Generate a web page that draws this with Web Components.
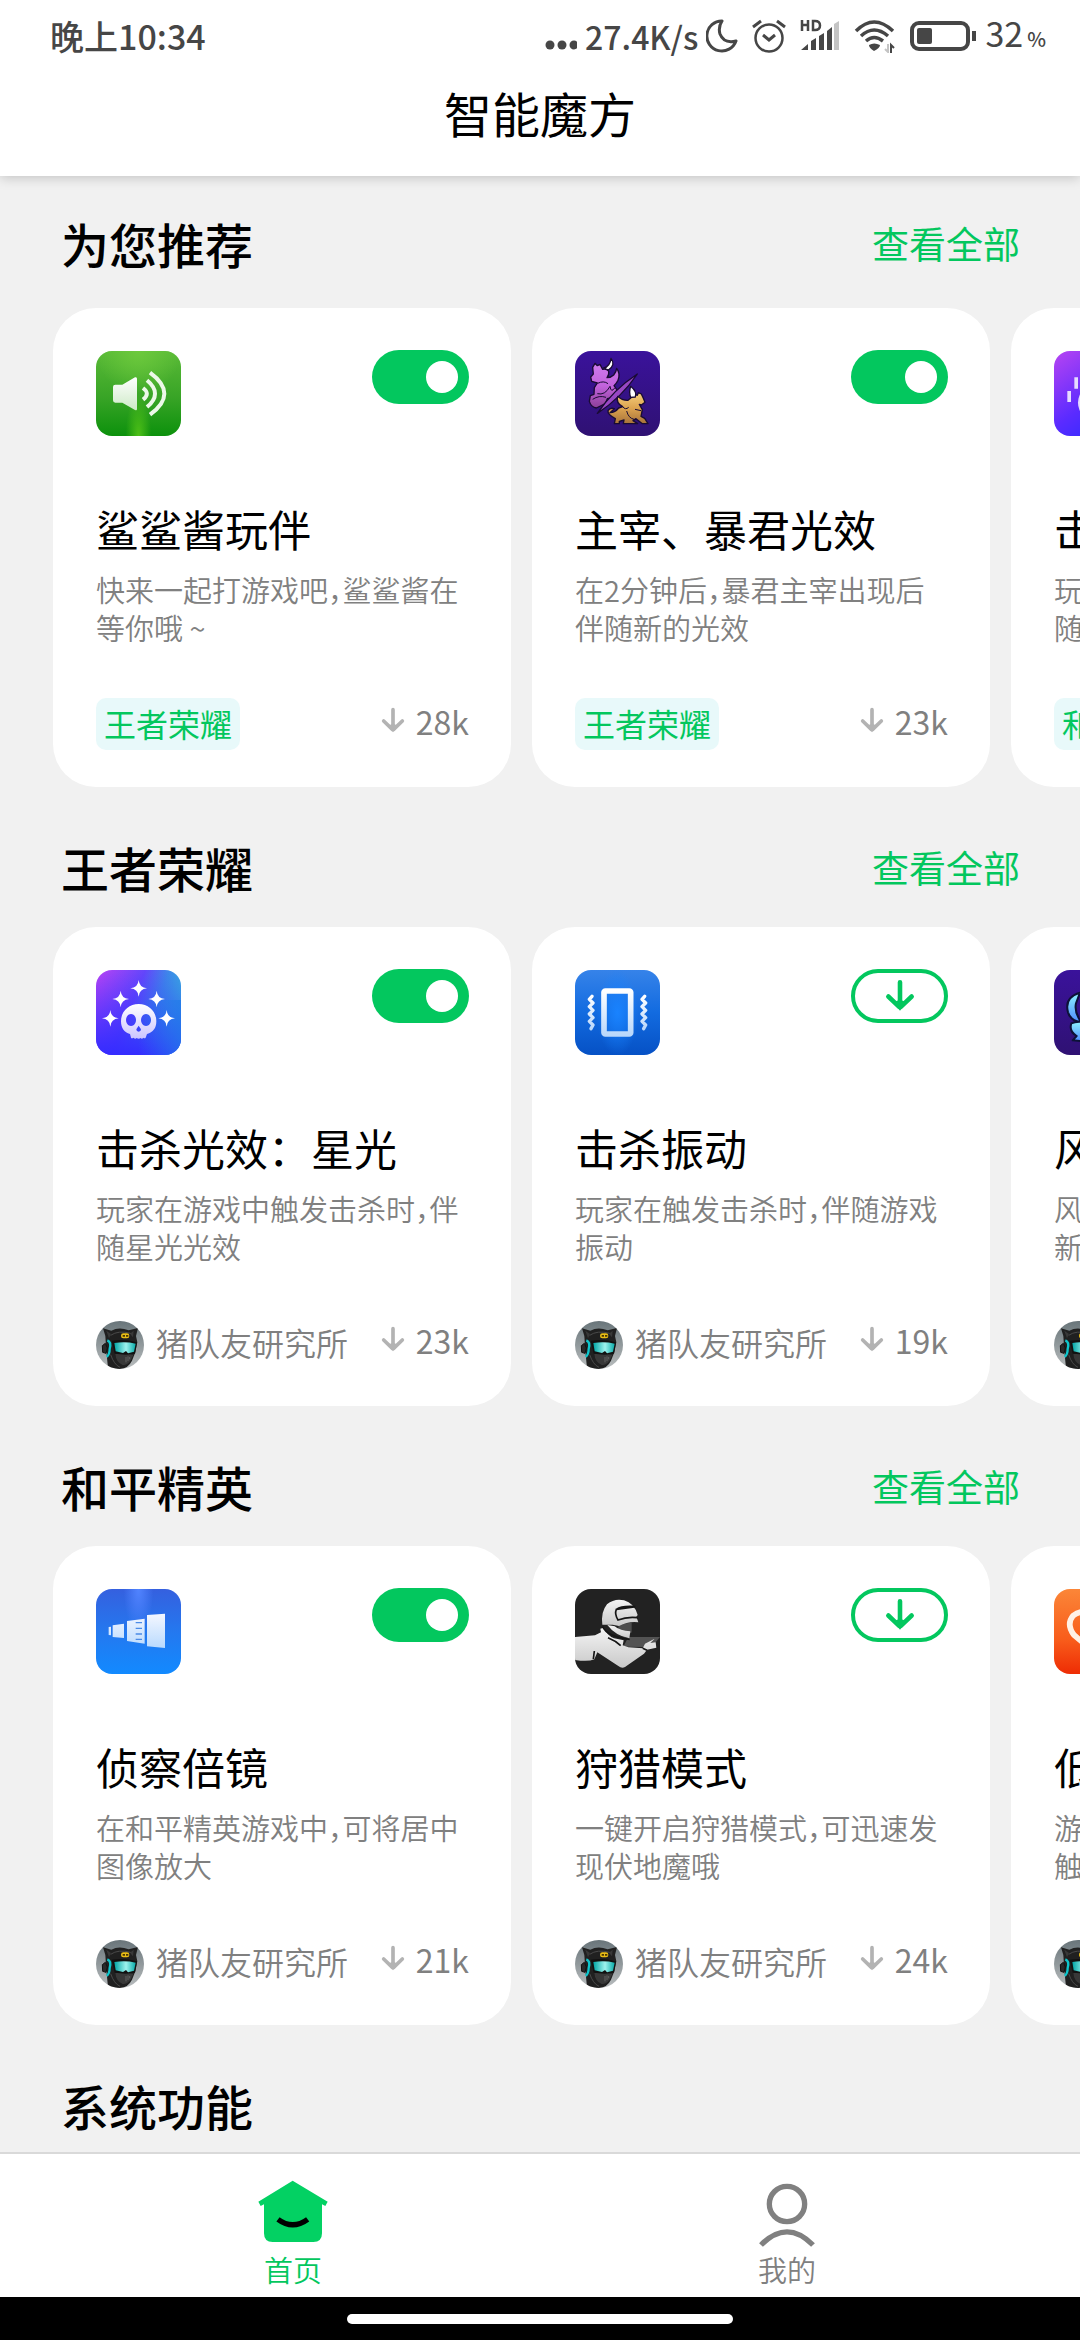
<!DOCTYPE html>
<html lang="zh-CN">
<head>
<meta charset="utf-8">
<meta name="viewport" content="width=device-width, initial-scale=1">
<title>智能魔方</title>
<style>
  :root {
    --green: #03c75e;
    --page: #f1f1f1;
    --text: #000;
    --muted: #808080;
    --status: #464646;
  }
  body {
    margin: 0;
    font-family: "Noto Sans CJK SC", "Noto Sans", sans-serif;
    color: var(--text);
    background: var(--page);
  }
</style>
</head>
<body>
<magic-cube-app>
  <status-bar slot="top" time="晚上10:34" speed="27.4K/s" battery="32"></status-bar>
  <app-header slot="top">智能魔方</app-header>

  <feature-section name="为您推荐" more first>
    <feature-card icon="speaker" name="鲨鲨酱玩伴" desc="快来一起打游戏吧，鲨鲨酱在等你哦 ~" tag="王者荣耀" count="28k" enabled></feature-card>
    <feature-card icon="beasts" name="主宰、暴君光效" desc="在2分钟后，暴君主宰出现后伴随新的光效" tag="王者荣耀" count="23k" enabled></feature-card>
    <feature-card icon="burst" name="击杀光效" desc="玩家在游戏中触发击杀时，伴随光效" tag="和平精英" count="22k" enabled></feature-card>
  </feature-section>

  <feature-section name="王者荣耀" more>
    <feature-card icon="skull" name="击杀光效：星光" desc="玩家在游戏中触发击杀时，伴随星光光效" author="猪队友研究所" count="23k" enabled></feature-card>
    <feature-card icon="vibrate" name="击杀振动" desc="玩家在触发击杀时，伴随游戏振动" author="猪队友研究所" count="19k"></feature-card>
    <feature-card icon="dragon" name="风暴龙王光效" desc="风暴龙王出现后，将会伴随着新的光效" author="猪队友研究所" count="18k"></feature-card>
  </feature-section>

  <feature-section name="和平精英" more>
    <feature-card icon="scope" name="侦察倍镜" desc="在和平精英游戏中，可将居中图像放大" author="猪队友研究所" count="21k" enabled></feature-card>
    <feature-card icon="hunter" name="狩猎模式" desc="一键开启狩猎模式，可迅速发现伏地魔哦" author="猪队友研究所" count="24k"></feature-card>
    <feature-card icon="heart" name="低血振动" desc="游戏中当角色血量较低时，将触发振动" author="猪队友研究所" count="20k"></feature-card>
  </feature-section>

  <feature-section name="系统功能"></feature-section>

  <tab-bar slot="bottom">
    <tab-item icon="home" href="#home" active>首页</tab-item>
    <tab-item icon="mine" href="#mine">我的</tab-item>
  </tab-bar>
  <home-indicator slot="bottom"></home-indicator>
</magic-cube-app>

<script>
// app tiles, all drawn on a 255 x 255 grid
const star = (x, y) => `<path d="M${x} ${y - 25}Q${x + 2} ${y - 2} ${x + 25} ${y}Q${x + 2} ${y + 2} ${x} ${y + 25}Q${x - 2} ${y + 2} ${x - 25} ${y}Q${x - 2} ${y - 2} ${x} ${y - 25}Z"/>`;
const zigzag = x => `M${x + 3} 79L${x - 5} 88L${x + 6} 99L${x - 5} 110L${x + 6} 121L${x - 5} 132L${x + 6} 143L${x - 5} 154L${x + 6} 165L${x} 176`;

const tiles = {
  speaker: `
    <linearGradient id="g" x2="0" y2="1"><stop stop-color="#5aba37"/><stop offset=".55" stop-color="#38a426"/><stop offset="1" stop-color="#0c910c"/></linearGradient>
    <radialGradient id="l" cx=".5" cy="1" r=".5" gradientTransform="matrix(.3 0 0 1 .35 0)"><stop stop-color="#4fc018"/><stop offset="1" stop-color="#4fc018" stop-opacity="0"/></radialGradient>
    <radialGradient id="t" cx=".5" cy="0" r=".5"><stop stop-color="#6cc93c"/><stop offset="1" stop-color="#6cc93c" stop-opacity="0"/></radialGradient>
    <linearGradient id="w" x2="0" y2="1"><stop stop-color="#fff"/><stop offset="1" stop-color="#cdeac6"/></linearGradient>
    <path fill="url(#g)" d="M0 0H255V255H0Z"/><path fill="url(#l)" d="M0 0H255V255H0Z"/><path fill="url(#t)" d="M0 0H255V255H0Z"/>
    <path fill="url(#w)" d="M58 101H79L117 79Q123 77 123 83V174Q123 180 117 177L79 155H58Q51 155 51 148V108Q51 101 58 101Z"/>
    <path fill="none" stroke="#ecf8e8" stroke-width="12" d="M141 111Q164 128 141 146M153 88Q201 128 153 168M162 65Q248 128 162 191"/>`,
  beasts: `
    <linearGradient id="g" x2="0" y2="1"><stop stop-color="#3a129b"/><stop offset="1" stop-color="#2f1173"/></linearGradient>
    <linearGradient id="p" x2="0" y2="1"><stop stop-color="#cf7bee"/><stop offset=".5" stop-color="#c263dc"/><stop offset="1" stop-color="#8c3f98"/></linearGradient>
    <linearGradient id="y" x2="0" y2="1"><stop stop-color="#f6cf7c"/><stop offset=".5" stop-color="#dca350"/><stop offset="1" stop-color="#a8733a"/></linearGradient>
    <path fill="url(#g)" d="M0 0H255V255H0Z"/>
    <g stroke="#190b33" stroke-width="4" stroke-linejoin="round">
      <path fill="url(#p)" d="M60 37L67 44L75 40L83 55Q93 52 101 60Q103 72 96 80Q108 80 116 72Q124 62 125 52Q137 68 129 88Q125 97 117 104L127 118L123 138L97 143L91 158L64 171Q48 168 43 151L46 134L57 130L58 110L67 96L50 91L47 78L55 69L53 49Z"/>
      <path fill="#fff" d="M108 22Q123 42 100 57L86 51Q105 47 108 22Z"/>
      <path fill="#9847c4" d="M187 69Q139 140 67 187Q115 116 187 69Z"/>
      <path fill="url(#y)" d="M181 131L187 133L190 125L199 129L205 142L210 154L199 162L193 160L202 176L198 196L209 202L219 218H202L183 203L174 209L188 218H145L147 207L133 211V218H118L121 203Q97 190 99 179Q105 169 118 173L105 185Q121 184 131 171L143 167Q122 156 128 136Q142 149 159 148L168 140Z"/>
      <path fill="#fff" d="M167 106Q187 122 181 138L167 139Q161 124 167 106Z"/>
      <path fill="none" stroke-width="3" d="M68 97Q86 88 99 98M67 128Q90 134 105 106Q108 127 119 111M53 145Q72 132 93 139M161 169Q151 178 143 167M155 180Q160 201 177 205M180 175L198 179"/>
    </g>`,
  burst: `
    <linearGradient id="g" x2=".7" y2="1"><stop stop-color="#b744f2"/><stop offset=".6" stop-color="#5b2bff"/><stop offset="1" stop-color="#2a2bff"/></linearGradient>
    <path fill="url(#g)" d="M0 0H255V255H0Z"/>
    <path fill="#e6dcff" d="M61 79h11v34h-11zM40 120h11v33h-11zM180 79h11v34h-11zM204 120h11v33h-11z"/><circle cx="127" cy="155" r="55" fill="#e6dcff"/>`,
  skull: `
    <linearGradient id="g" x2="1" y2=".4"><stop stop-color="#bb43f4"/><stop offset=".5" stop-color="#6446fb"/><stop offset=".75" stop-color="#3d8be8"/><stop offset="1" stop-color="#35bedb"/></linearGradient>
    <linearGradient id="b" x2="0" y2="1"><stop stop-color="#3a2bff" stop-opacity="0"/><stop offset="1" stop-color="#352cff"/></linearGradient>
    <linearGradient id="r"><stop offset=".5" stop-color="#217bea" stop-opacity="0"/><stop offset="1" stop-color="#217bea"/></linearGradient>
    <linearGradient id="w" x2="0" y2="1"><stop stop-color="#fff"/><stop offset="1" stop-color="#ccc4ff"/></linearGradient>
    <path fill="url(#g)" d="M0 0H255V255H0Z"/><path fill="url(#b)" d="M0 0H255V255H0Z"/><path fill="url(#r)" opacity=".75" d="M0 90H255V255H0Z"/>
    <g fill="#fff">${star(128, 55)}${star(74, 87)}${star(182, 87)}${star(43, 145)}${star(212, 145)}</g>
    <path fill="url(#w)" fill-rule="evenodd" d="M128 102C158 102 181 124 181 154C181 175 171 187 153 192L149 203Q146 207 142 203Q138 209 134 204Q128 209 122 204Q117 209 113 203Q106 207 105 203L102 192C84 187 75 174 75 154C75 124 98 102 128 102ZM105 132A15 18 0 1 0 105.1 132ZM150 132A15 18 0 1 0 150.100 132ZM128 167L121 178Q121 185 128 185Q135 185 135 178Z"/>`,
  vibrate: `
    <linearGradient id="g" x2="0" y2="1"><stop stop-color="#3683e9"/><stop offset=".5" stop-color="#126be0"/><stop offset="1" stop-color="#0651c5"/></linearGradient>
    <radialGradient id="l" cx=".5" cy=".5" r=".5" gradientTransform="matrix(.5 0 0 1 .25 0)"><stop stop-color="#1983ff"/><stop offset="1" stop-color="#1983ff" stop-opacity="0"/></radialGradient>
    <linearGradient id="w" x2="0" y2="1"><stop stop-color="#fff"/><stop offset="1" stop-color="#bad8fb"/></linearGradient>
    <path fill="url(#g)" d="M0 0H255V255H0Z"/><path fill="url(#l)" d="M0 0H255V255H0Z"/>
    <rect x="87" y="63" width="80" height="129" rx="4" fill="none" stroke="url(#w)" stroke-width="17"/>
    <path fill="none" stroke="url(#w)" stroke-width="10" stroke-linecap="round" stroke-linejoin="round" d="${zigzag(48)}${zigzag(206)}"/>`,
  dragon: `
    <linearGradient id="g" x2="0" y2="1"><stop stop-color="#3a129b"/><stop offset="1" stop-color="#2f1173"/></linearGradient>
    <linearGradient id="w" x2="0" y2="1"><stop stop-color="#8df4ff"/><stop offset="1" stop-color="#4e8bff"/></linearGradient>
    <path fill="url(#g)" d="M0 0H255V255H0Z"/>
    <g fill="url(#w)" stroke="#0d1238" stroke-width="6" stroke-linejoin="round">
      <path d="M78 68Q30 82 42 127Q50 153 82 157Q60 126 66 100Z"/>
      <path d="M52 160Q70 150 110 160L140 190L100 215L56 211L68 198Q44 184 52 160Z"/>
    </g>`,
  scope: `
    <linearGradient id="g" x2="0" y2="1"><stop stop-color="#3560df"/><stop offset=".5" stop-color="#2478ef"/><stop offset="1" stop-color="#128aff"/></linearGradient>
    <radialGradient id="l" cx=".5" cy="0" r=".5" gradientTransform="matrix(.35 0 0 1 .325 0)"><stop stop-color="#5184ff"/><stop offset="1" stop-color="#5184ff" stop-opacity="0"/></radialGradient>
    <linearGradient id="w" x2="0" y2="1"><stop stop-color="#f4f7ff"/><stop offset="1" stop-color="#b9dafe"/></linearGradient>
    <path fill="url(#g)" d="M0 0H255V255H0Z"/><path fill="url(#l)" d="M0 0H255V255H0Z"/>
    <path fill="url(#w)" d="M38 114L45 113V139L38 138ZM50 109L84 104V147L50 144ZM93 96L146 89V164L93 156ZM153 78L207 74V177L153 172Z"/>
    <path stroke="#4b8be6" stroke-width="4" d="M119 101H138M119 118H138M119 135H138M119 151H138"/>`,
  hunter: `
    <linearGradient id="w" x2="0" y2="1"><stop stop-color="#f4f4f4"/><stop offset="1" stop-color="#c9c9c9"/></linearGradient>
    <path fill="#222" d="M0 0H255V255H0Z"/>
    <path fill="#535353" d="M160 144H255L238 164L205 174L145 173Z"/>
    <path fill="#4c4c4c" d="M132 105L170 101V130L150 146L128 128Z"/>
    <path fill="url(#w)" d="M0 144L60 139L78 130L76 119L86 116Q96 139 117 148L146 154L143 169L160 175L203 178L210 164L239 149L226 162L242 160L244 176L216 182L207 194L150 234Q140 239 130 231L67 190L58 211Q40 219 0 213Z"/>
    <path fill="url(#w)" d="M82 107Q77 69 96 46Q119 27 147 34Q177 42 188 78L184 83L190 100Q161 96 132 111L113 107Z"/>
    <path fill="url(#w)" d="M97 108L119 112Q135 126 166 127L163 148Q121 140 97 108Z"/>
    <g fill="none" stroke="#151515" stroke-width="5"><path d="M178 54L124 61Q118 75 129 93Q157 82 188 86M124 61Q140 50 181 53M83 113Q96 143 164 151M99 146Q122 155 137 170M58 186L55 210M203 178L216 184"/></g>`,
  heart: `
    <linearGradient id="g" x2="0" y2="1"><stop stop-color="#fb8638"/><stop offset=".6" stop-color="#f85c1b"/><stop offset="1" stop-color="#ee2c04"/></linearGradient>
    <path fill="url(#g)" d="M0 0H255V255H0Z"/>
    <path fill="none" stroke="#fff1e6" stroke-width="17" d="M127 195L60 138Q36 106 57 80Q92 53 127 94Q162 53 197 80Q218 106 195 138Z"/>`
};

const avatar = `
  <svg class="avatar" viewBox="0 0 144 144" aria-hidden="true">
    <defs>
      <linearGradient id="bg" x2="0" y2="1"><stop stop-color="#69757a"/><stop offset="1" stop-color="#b9bdbe"/></linearGradient>
      <linearGradient id="visor"><stop stop-color="#00a5a5"/><stop offset=".55" stop-color="#9ff3ee"/><stop offset="1" stop-color="#08aaa8"/></linearGradient>
    </defs>
    <path fill="url(#bg)" d="M0 0H144V144H0Z"/>
    <path fill="#202020" d="M21 22L46 29Q69 17 98 28L126 21L120 45L124 64L118 94L108 119Q96 145 65 144L36 141L31 90L28 45Z"/>
    <path fill="#383838" d="M31 29L45 39L39 52ZM113 29L102 38L111 49ZM58 98Q84 92 112 102L103 120Q93 133 80 132Q60 124 58 98Z"/>
    <path fill="none" stroke="#4a4a4a" stroke-width="3" d="M44 43Q67 27 104 37M44 101Q54 131 72 139"/>
    <path fill="#111" d="M47 59Q84 53 123 64L117 98L89 101L56 98Z"/>
    <path fill="url(#visor)" d="M55 66Q89 61 119 68L114 92L96 97L90 90L81 96L59 91Z"/>
    <path fill="none" stroke="#0ec6cc" stroke-width="7" d="M34 58Q47 63 41 84Q41 101 32 107"/>
    <path fill="#292929" stroke="#101010" stroke-width="3" d="M19 74L28 67L34 81L30 97L20 94Z"/>
    <rect x="75" y="37" width="25" height="15" rx="7" fill="#e9bd16"/>
    <path fill="#4d3900" d="M80 42h7v5h-7zM90 42h7v5h-7z"/>
    <path stroke="#777" stroke-width="2" d="M90 108V124M96 106V120M101 108V115"/>
  </svg>`;

const arrow = `<svg class="arrow" viewBox="0 0 72 84" aria-hidden="true"><path fill="none" stroke="currentColor" stroke-width="11" stroke-linecap="round" d="M36 8V62M8 42L34 67M64 42L38 67"/><path fill="currentColor" d="M20 56L36 50L52 56L36 76Z"/></svg>`;

class MagicCubeApp extends HTMLElement {
  constructor() {
    super();
    this.attachShadow({ mode: 'open' }).innerHTML = `
      <style>
        :host { display: flex; flex-direction: column; height: 100vh; overflow: hidden; }
        header { position: relative; z-index: 1; background: #fff; box-shadow: 0 1px 12px rgba(0, 0, 0, .22); }
        main { flex: 1; min-height: 0; overflow-y: auto; scrollbar-width: none; }
      </style>
      <header><slot name="top"></slot></header>
      <main><slot></slot></main>
      <slot name="bottom"></slot>`;
  }
}
customElements.define('magic-cube-app', MagicCubeApp);

class StatusBar extends HTMLElement {
  constructor() {
    super();
    this.attachShadow({ mode: 'open' }).innerHTML = `
      <style>
        :host {
          display: flex; align-items: center; justify-content: space-between;
          height: 72px; padding: 0 34px 0 50px;
          font-size: 34px; line-height: 48px; color: var(--status);
        }
        .net, .icons, .battery { display: flex; align-items: center; }
        .icons { gap: 14px; }
        .net { gap: 8px; }
        .battery { gap: 8px; }
        .time, .speed { font-weight: 500; }
        .speed { font-size: 32px; }
        small { font-size: 20px; margin-left: 4px; font-weight: 500; }
        svg { display: block; fill: none; stroke: currentColor; }
      </style>
      <span class="time">${this.getAttribute('time')}</span>
      <div class="icons">
        <span class="net">
          <svg width="32" height="30" viewBox="2 0 32 30" style="fill:currentColor;stroke:none"><circle cx="7" cy="24" r="4.500"/><circle cx="19" cy="24" r="4.500"/><circle cx="31" cy="24" r="4.500"/></svg>
          <span class="speed">${this.getAttribute('speed')}</span>
          <svg width="32" height="34" viewBox="0 0 32 34"><path stroke-width="3" stroke-linejoin="round" d="M16 2A15 15 0 1 0 30 22Q18 25 14 15Q12 8 16 2Z"/></svg>
        </span>
        <svg width="34" height="34" viewBox="0 0 34 34"><circle cx="17" cy="19" r="13.500" stroke-width="2.500"/><path stroke-width="3" d="M11 16L17 21L23 16M1 8L9 2M33 8L25 2"/></svg>
        <svg width="40" height="34" viewBox="0 0 40 34">
          <path stroke-width="2.500" d="M2 1V12M8 1V12M2 6H8M13 2V11H15Q20 11 20 6.500Q20 2 15 2Z"/>
          <path stroke="none" fill="currentColor" d="M1 31L8 25V31ZM11 22L16 19V31H11ZM19 17L24 14V31H19ZM27 12L32 8V31H27Z"/>
          <path stroke="none" fill="#c4c4c4" d="M34 5L39 2V31H34Z"/>
        </svg>
        <svg width="42" height="34" viewBox="0 0 42 34">
          <path stroke-width="3.500" d="M2 12Q20 -6 39 12M7 17Q20 5 34 17M12 22Q20 15 29 22"/>
          <path stroke="none" fill="currentColor" d="M15 26Q20 23 26 26Q26 29 20 32Q15 29 15 26Z"/>
          <path stroke="#c4c4c4" stroke-width="2" d="M34 25V33L31 30"/><path stroke-width="2" d="M37 34V26L40 29"/>
        </svg>
        <span class="battery">
          <svg width="67" height="32" viewBox="0 0 67 32"><rect x="2" y="3" width="56" height="26" rx="7" stroke-width="4"/><rect x="7" y="8" width="15" height="16" rx="2" fill="currentColor" stroke="none"/><path stroke-width="4" d="M64 11V21"/></svg>
          <span>${this.getAttribute('battery')}<small>%</small></span>
        </span>
      </div>`;
  }
}
customElements.define('status-bar', StatusBar);

class AppHeader extends HTMLElement {
  constructor() {
    super();
    this.attachShadow({ mode: 'open' }).innerHTML = `
      <style>
        :host { display: block; padding: 10px 0 34px; }
        h1 { margin: 0; font-size: 48px; line-height: 60px; font-weight: 400; text-align: center; }
      </style>
      <h1><slot></slot></h1>`;
  }
}
customElements.define('app-header', AppHeader);

class FeatureSection extends HTMLElement {
  constructor() {
    super();
    const more = this.hasAttribute('more') ? '<a href="#all">查看全部</a>' : '';
    this.attachShadow({ mode: 'open' }).innerHTML = `
      <style>
        :host { display: block; }
        .head {
          display: flex; align-items: center; justify-content: space-between;
          padding: 50px 60px 30px 61px;
        }
        :host([first]) .head { padding-top: 37px; padding-bottom: 35px; }
        h2 { margin: 0; font-size: 48px; line-height: 60px; font-weight: 500; }
        a { font-size: 37px; line-height: 60px; color: var(--green); text-decoration: none; }
        .list {
          display: flex; gap: 21px; padding: 0 53px;
          overflow-x: auto; scrollbar-width: none;
        }
      </style>
      <div class="head"><h2>${this.getAttribute('name')}</h2>${more}</div>
      <div class="list"><slot></slot></div>`;
  }
}
customElements.define('feature-section', FeatureSection);

class FeatureCard extends HTMLElement {
  constructor() {
    super();
    const attr = name => this.getAttribute(name);
    const control = this.hasAttribute('enabled')
      ? '<input type="checkbox" role="switch" aria-labelledby="name" checked>'
      : `<button type="button" aria-labelledby="name">${arrow}</button>`;
    const source = attr('tag')
      ? `<span class="tag">${attr('tag')}</span>`
      : `<span class="author">${avatar}${attr('author')}</span>`;

    this.attachShadow({ mode: 'open' }).innerHTML = `
      <style>
        :host {
          display: block; flex: 0 0 458px; box-sizing: border-box;
          padding: 42px 42px 37px 43px;
          border-radius: 43px; background: #fff;
        }
        .top { display: flex; justify-content: space-between; align-items: flex-start; height: 86px; }
        .tile { align-self: flex-end; width: 85px; height: 85px; border-radius: 16px; }
        input, button { box-sizing: border-box; width: 97px; height: 54px; margin: 0; border-radius: 27px; }
        input {
          appearance: none; display: flex; align-items: center; justify-content: flex-end;
          padding-right: 11px; background: var(--green);
        }
        input::before { content: ""; width: 32px; height: 32px; border-radius: 50%; background: #fff; }
        button {
          display: flex; align-items: center; justify-content: center;
          padding: 0; border: 4px solid var(--green); background: none; color: var(--green);
        }
        button .arrow { width: 30px; height: 35px; }
        h3 { margin: 62px 0 12px; font-size: 43px; line-height: 60px; font-weight: 400; white-space: nowrap; }
        p {
          margin: 0 0 52px;
          font-size: 29px; line-height: 38px; font-weight: 350; color: var(--muted);
          font-feature-settings: "halt";
        }
        .foot {
          display: flex; align-items: center; justify-content: space-between; height: 52px;
          font-size: 32px; line-height: 50px; white-space: nowrap; color: var(--muted);
        }
        .tag { padding: 0 8px 2px; border-radius: 10px; background: #e8f9fa; color: var(--green); }
        .author { display: flex; align-items: flex-start; gap: 12px; font-weight: 350; }
        .avatar { width: 48px; height: 48px; border-radius: 50%; margin-top: 4px; }
        .count { display: flex; align-items: center; gap: 11px; line-height: 46px; align-self: flex-start; }
        .count .arrow { width: 24px; height: 28px; color: #b3b3b3; }
      </style>
      <div class="top">
        <svg class="tile" viewBox="0 0 255 255" aria-hidden="true">${tiles[attr('icon')]}</svg>
        ${control}
      </div>
      <h3 id="name">${attr('name')}</h3>
      <p>${attr('desc')}</p>
      <div class="foot">${source}<span class="count">${arrow}${attr('count')}</span></div>`;
  }
}
customElements.define('feature-card', FeatureCard);

class TabBar extends HTMLElement {
  constructor() {
    super();
    this.attachShadow({ mode: 'open' }).innerHTML = `
      <style>
        :host { display: block; border-top: 2px solid #d9d9d9; background: #fff; }
        nav { display: flex; padding: 0 46px; }
      </style>
      <nav><slot></slot></nav>`;
  }
}
customElements.define('tab-bar', TabBar);

const tabIcons = {
  home: `<path fill="#03d163" d="M107 8L212 71L205 84L195 79V166Q195 192 169 192H47Q21 192 21 166V79L11 84L4 71Z"/>
    <path fill="none" stroke="#000" stroke-width="16" d="M63 124Q107 157 152 124"/>`,
  mine: `<g fill="none" stroke="currentColor" stroke-width="16"><circle cx="108" cy="78" r="53"/><path d="M30 201Q108 122 186 201"/></g>`
};

class TabItem extends HTMLElement {
  constructor() {
    super();
    this.attachShadow({ mode: 'open' }).innerHTML = `
      <style>
        :host { display: block; flex: 1; color: var(--muted); }
        :host([active]) { color: var(--green); }
        a {
          display: flex; flex-direction: column; align-items: center;
          padding: 24px 0 9px; font-size: 29px; line-height: 38px; font-weight: 350;
          color: inherit; text-decoration: none;
        }
        svg { width: 72px; height: 72px; }
      </style>
      <a href="${this.getAttribute('href')}">
        <svg viewBox="0 0 216 216" aria-hidden="true">${tabIcons[this.getAttribute('icon')]}</svg>
        <slot></slot>
      </a>`;
  }
}
customElements.define('tab-item', TabItem);

class HomeIndicator extends HTMLElement {
  constructor() {
    super();
    this.attachShadow({ mode: 'open' }).innerHTML = `
      <style>
        :host { display: flex; justify-content: center; padding: 17px 0 16px; background: #000; }
        div { width: 386px; height: 10px; border-radius: 5px; background: #fff; }
      </style>
      <div></div>`;
  }
}
customElements.define('home-indicator', HomeIndicator);
</script>
</body>
</html>
